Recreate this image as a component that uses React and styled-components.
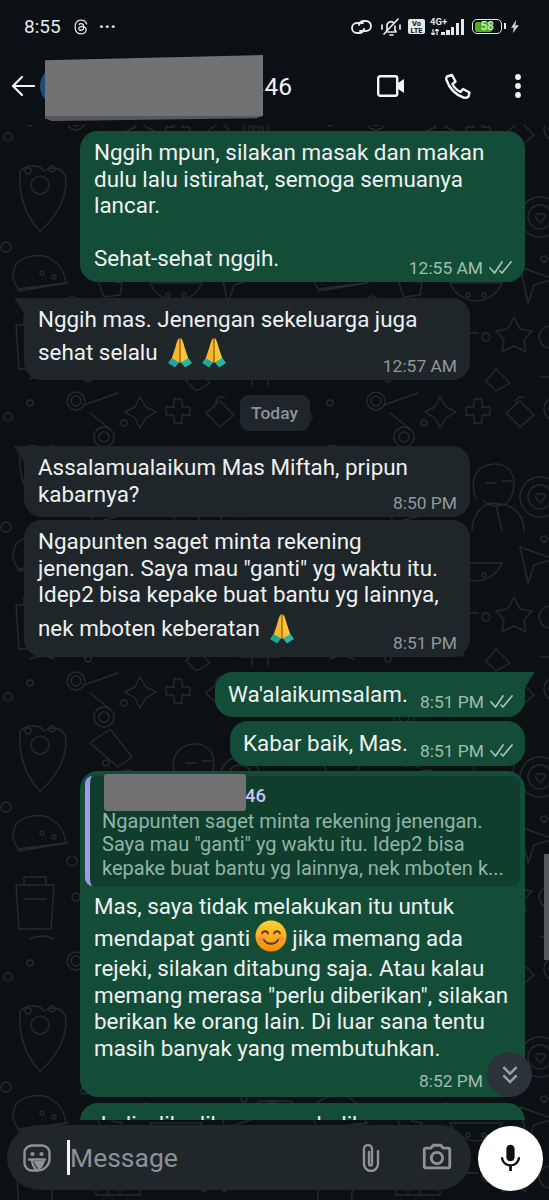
import React from "react";
import styled, { createGlobalStyle } from "styled-components";
import { MdMic, MdOutlinePhotoCamera, MdKeyboardDoubleArrowDown } from "react-icons/md";
import { FaThreads } from "react-icons/fa6";

const GlobalStyle = createGlobalStyle`
  html, body { margin: 0; padding: 0; background: #0b1014; }
  * { box-sizing: border-box; }
`;

// wallpaper doodles, roughly the kind of things whatsapp scatters around
const doodleTile = `<svg xmlns='http://www.w3.org/2000/svg' width='300' height='280' fill='none' stroke='#23292c' stroke-width='1.4' stroke-linecap='round' stroke-linejoin='round'>
<circle cx='76' cy='10' r='9'/><circle cx='76' cy='10' r='5'/><path d='M84 14l34-12M90 22l20 16'/><circle cx='104' cy='46' r='10'/><circle cx='104' cy='46' r='5'/>
<path d='M140 6l6 10 10 5-10 6-6 10-5-10-10-6 10-5z'/><path d='M166 16h8v-8h8v8h8v8h-8v8h-8v-8h-8z'/><path d='M206 22l14-12 14 14-14 12zM216 12c0-5 4-8 8-5'/>
<circle cx='8' cy='26' r='4'/><circle cx='30' cy='12' r='3'/><circle cx='124' cy='32' r='3'/><circle cx='256' cy='18' r='12'/><circle cx='256' cy='18' r='7'/><path d='M252 16c2-3 4 0 4 1 1-2 5-2 4 1l-4 5z'/>
<path d='M20 60c10-8 20-6 24 0 10-6 22-2 22 10 0 22-14 40-26 50-14-14-22-36-20-60z'/><circle cx='40' cy='74' r='9'/><circle cx='28' cy='60' r='3'/><circle cx='52' cy='58' r='3'/>
<path d='M90 72l20-14 22 28-14 10z'/><path d='M90 124l50-14 4 8-50 14z'/><path d='M118 104c2-6 14-6 16-2l2 8-18 4z'/><circle cx='106' cy='92' r='3'/>
<path d='M176 108c-6-16-2-30 12-34 14-4 26 4 26 18 0 10-4 20-12 22-8 2-14 0-18-4M186 92h10M202 90h10M172 140c0-14 8-26 20-28l14 2c12 4 18 14 18 26M196 114l6 26'/>
<path d='M240 86a20 20 0 1 0 .1 0M240 94a12 12 0 1 0 .1 0'/><path d='M236 104c2-3 4-1 4 0 1-1 3-3 5 0 1 3-3 6-5 8-2-2-5-5-4-8z'/>
<path d='M14 158c4-14 30-18 40-8 8 6 10 12 12 22l-48 6c-4-6-6-14-4-20zM18 180l50-8'/><circle cx='42' cy='162' r='2'/><circle cx='54' cy='166' r='2'/><circle cx='84' cy='140' r='3'/><circle cx='72' cy='190' r='5'/><circle cx='6' cy='136' r='5'/>
<path d='M94 158l14-4 4 16 10 2-2 12-16 2z'/><circle cx='146' cy='156' r='4'/><path d='M150 172a28 28 0 0 0 52 0z'/><circle cx='168' cy='184' r='2'/><circle cx='184' cy='184' r='2'/>
<path d='M220 156l34 12-20 6-6 18z'/><path d='M262 150h26a7 7 0 0 1 0 14h-26a7 7 0 0 1 0-14z'/><circle cx='272' cy='157' r='6'/><circle cx='244' cy='148' r='3'/>
<path d='M16 214h38l-3 44H19z'/><path d='M24 214v-8h22v8M24 228h22'/><circle cx='76' cy='226' r='4'/><path d='M96 210h44v34H96zM96 220h44M108 210v34M120 210v34M104 250h28'/><path d='M112 196l6-6 6 6'/>
<path d='M158 222h20M186 222a4 4 0 1 0 .1 0'/><path d='M214 206l6 12 12 2-8 9 2 12-12-6-12 6 2-12-8-9 12-2z'/><circle cx='250' cy='226' r='11'/><path d='M268 204c10-6 22 0 22 12s-10 22-22 22-16-8-16-8'/>
<circle cx='160' cy='262' r='3'/><circle cx='88' cy='268' r='3'/><path d='M196 258l14 14-14 8-10-10zM240 266h40M252 258v16M268 258v16'/><path d='M30 268c8-4 16-4 24 0'/></svg>`;

const Page = styled.div`
  width: 549px;
  height: 1200px;
  position: relative;
  overflow: hidden;
  display: flex;
  flex-direction: column;
  background: #0b1014;
  font-family: Roboto, "Liberation Sans", sans-serif;
`;

const StatusBar = styled.div`
  height: 47px;
  padding: 6px 30px 0 24px;
  display: flex;
  align-items: center;
  color: #e6e8e9;
`;

const StatusTime = styled.span`
  font-size: 19px;
  margin-right: 12px;
`;

const Dots = styled.span`
  margin-left: 10px;
  font-size: 18px;
  letter-spacing: 0.5px;
  font-weight: 700;
  line-height: 1;
`;

const StatusRight = styled.div`
  margin-left: auto;
  display: flex;
  align-items: center;
`;

const VoLte = styled.span`
  width: 17px;
  height: 15px;
  margin-left: 6px;
  border-radius: 2px;
  background: #e6e8e9;
  color: #0b1014;
  font-size: 7.5px;
  font-weight: 700;
  line-height: 7px;
  text-align: center;
  padding-top: 1px;
`;

const NetWrap = styled.div`
  position: relative;
  width: 34px;
  height: 16px;
  margin-left: 5px;
  display: flex;
  align-items: flex-end;
  justify-content: flex-end;
  gap: 1.4px;
`;

const NetLabel = styled.span`
  position: absolute;
  left: 0;
  top: -2px;
  font-size: 9.5px;
  line-height: 10px;
  font-weight: 700;
`;

const NetArrows = styled.svg`
  position: absolute;
  left: 1px;
  bottom: 0;
`;

const SignalBar = styled.span`
  width: 3.4px;
  height: ${(p) => p.$h}px;
  background: #e6e8e9;
`;

const Battery = styled.span`
  position: relative;
  width: 30px;
  height: 15px;
  margin-left: 8px;
  border: 1.5px solid #e6e8e9;
  border-radius: 5px;
  padding: 1.5px;
  display: flex;
  &::after {
    content: "";
    position: absolute;
    right: -5px;
    top: 3px;
    width: 2px;
    height: 6px;
    background: #e6e8e9;
  }
`;

const BatteryFill = styled.span`
  width: 68%;
  background: #4caf22;
  border-radius: 2px;
  font-size: 12px;
  line-height: 9.5px;
  color: #e8f5e0;
  padding-left: 6px;
  white-space: nowrap;
`;

const Header = styled.div`
  height: 78px;
  padding-left: 11px;
  display: flex;
  align-items: center;
  color: #f2f4f5;
`;

const Avatar = styled.span`
  flex: none;
  width: 40px;
  height: 40px;
  margin-left: 5px;
  border-radius: 50%;
  background: #1d4a78;
`;

const Name = styled.span`
  width: 210px;
  margin-left: 2px;
  text-align: right;
  font-size: 24.5px;
`;

const HeaderActions = styled.div`
  margin-left: auto;
  padding-right: 19px;
  display: flex;
  align-items: center;
`;

const HeaderRedaction = styled.div`
  position: absolute;
  left: 45px;
  top: 55px;
  width: 218px;
  height: 66px;
  background: linear-gradient(#727274 93%, #58585a 93%);
  clip-path: polygon(0 8%, 100% 0, 100% 92%, 97% 96%, 3% 100%, 0 96%);
`;

const Wallpaper = styled.div`
  flex: 1;
  min-height: 0;
  display: flex;
  flex-direction: column;
  background-color: #0b1014;
  background-image: url("data:image/svg+xml,${encodeURIComponent(doodleTile)}");
  background-position: 0 -14px;
`;

const Chat = styled.div`
  flex: 1;
  min-height: 0;
  overflow: hidden;
  padding: 6px 24px 0;
  display: flex;
  flex-direction: column;
`;

const Bubble = styled.div`
  position: relative;
  flex: none;
  margin-top: ${(p) => p.$gap || 0}px;
  align-self: ${(p) => (p.$out ? "flex-end" : "flex-start")};
  width: ${(p) => p.$width || 446}px;
  background: ${(p) => (p.$out ? "#144d37" : "#1f2629")};
  border-radius: 18px;
  ${(p) => (p.$tail ? (p.$out ? "border-top-right-radius: 0;" : "border-top-left-radius: 0;") : "")}
  padding: ${(p) => (p.$row ? "9px 12px 3px 13px" : "8px 13px 2px 14px")};
  display: ${(p) => (p.$row ? "flex" : "block")};
  justify-content: space-between;
  align-items: flex-start;
  ${(p) =>
    p.$tail
      ? `&::before {
    content: "";
    position: absolute;
    ${p.$out ? "right: -10px;" : "left: -10px;"}
    top: 0;
    width: 10px;
    height: 16px;
    background: ${p.$out ? "#144d37" : "#1f2629"};
    clip-path: polygon(${p.$out ? "0 0, 100% 0, 0 100%" : "0 0, 100% 0, 100% 100%"});
  }`
      : ""}
`;

const Text = styled.div`
  font-size: 22.4px;
  line-height: 26.5px;
  color: #eef1f2;
  white-space: pre;
`;

const Meta = styled.div`
  display: flex;
  justify-content: flex-end;
  align-items: center;
  gap: 6px;
  margin-top: ${(p) => p.$pull ?? -16}px;
  margin-bottom: ${(p) => p.$after || 0}px;
  height: 24px;
  font-size: 17.4px;
  color: ${(p) => (p.$out ? "#9dbdae" : "#92989b")};
`;

const DayChip = styled.div`
  flex: none;
  align-self: center;
  margin: 15px 0;
  width: 70px;
  height: 36px;
  border-radius: 9px;
  background: #1f2629;
  color: #8e9396;
  font-size: 17.4px;
  font-weight: 500;
  display: flex;
  align-items: center;
  justify-content: center;
`;

const Quote = styled.div`
  position: relative;
  margin: -3px -8px 7px -9px;
  height: 110px;
  border-radius: 8px;
  border-left: 5px solid #a396ee;
  background: #0f3e2d;
  padding: 9px 0 0 12px;
`;

const QuoteName = styled.div`
  font-size: 18.5px;
  font-weight: 500;
  line-height: 22px;
  color: #c9c6f4;
  padding-left: 143px;
`;

const QuoteText = styled.div`
  margin-top: 3px;
  font-size: 20px;
  line-height: 23.6px;
  color: #92b3a5;
  white-space: pre;
`;

const QuoteRedaction = styled.div`
  position: absolute;
  left: 14px;
  top: -2px;
  width: 142px;
  height: 37px;
  border-radius: 3px;
  background: #707173;
`;

const Smile = styled.svg`
  width: 32px;
  height: 32px;
  vertical-align: -9px;
  margin: 1px 0 3px -1px;
`;

const Pray = styled.svg`
  width: 24px;
  height: 31px;
  vertical-align: -8px;
  margin: 5px 5px 0;
`;

const ScrollDown = styled.div`
  position: absolute;
  left: 487px;
  top: 1052px;
  width: 45px;
  height: 45px;
  border-radius: 50%;
  background: #2b3238;
  color: #9aa1a5;
  display: flex;
  align-items: center;
  justify-content: center;
`;

const ScrollThumb = styled.div`
  position: absolute;
  right: 0;
  top: 854px;
  width: 5px;
  height: 106px;
  background: #54585b;
`;

const Composer = styled.div`
  flex: none;
  height: 80px;
  padding: 5px 0 0 7px;
  display: flex;
  align-items: flex-start;
  gap: 7px;
`;

const InputPill = styled.div`
  width: 464px;
  height: 65px;
  border-radius: 33px;
  background: #1f272a;
  display: flex;
  align-items: center;
  padding-left: 16px;
  color: #8d9295;
`;

const Caret = styled.span`
  flex: none;
  width: 3px;
  height: 35px;
  background: #f4f5f5;
  margin-left: 16px;
`;

const Placeholder = styled.span`
  font-size: 26.5px;
  width: 292px;
`;

const Mic = styled.div`
  width: 65px;
  height: 65px;
  margin-top: 1px;
  border-radius: 50%;
  background: #fff;
  color: #0b1014;
  display: flex;
  align-items: center;
  justify-content: center;
`;

const Icon = styled.svg`
  display: block;
  flex: none;
  margin-left: ${(p) => p.$ml || 0}px;
`;

const PrayEmoji = () => (
  <Pray viewBox="0 0 24 31">
    <path d="M11.500 1C9.500 2 8.500 6 7.500 10L3.500 22l8 4z" fill="#f9b62c" />
    <path d="M12.500 1c2 1 3 5 4 9l4 12-8 4z" fill="#fcc437" />
    <path d="M3.500 21L0 26l7 4.500 4-5z" fill="#1fa69a" />
    <path d="M20.500 21l3.500 5-7 4.500-4-5z" fill="#26b5a7" />
    <path d="M12 3v22" stroke="#dc8c14" strokeWidth="1" />
  </Pray>
);

const SmileEmoji = () => (
  <Smile viewBox="0 0 32 32">
    <defs>
      <linearGradient id="smileFace" x1="0" y1="0" x2="0" y2="1">
        <stop offset="0" stopColor="#fdd135" />
        <stop offset="1" stopColor="#f58a0b" />
      </linearGradient>
    </defs>
    <circle cx="16" cy="16" r="15.500" fill="url(#smileFace)" />
    <ellipse cx="6.500" cy="19" rx="3.500" ry="2.500" fill="#f4796b" opacity=".7" />
    <ellipse cx="25.500" cy="19" rx="3.500" ry="2.500" fill="#f4796b" opacity=".7" />
    <path d="M7 13.500c1-3 5-3 6 0M19 13.500c1-3 5-3 6 0M9 20c3 5 11 5 14 0" fill="none" stroke="#5d3a12" strokeWidth="1.800" strokeLinecap="round" />
  </Smile>
);

const Ticks = () => (
  <Icon width="23" height="15" viewBox="0 0 23 15" fill="none" stroke="#a5c2b5" strokeWidth="1.700" strokeLinecap="round" strokeLinejoin="round">
    <path d="M1 8l4.500 5L13 2M11 11l2 2L22 2" />
  </Icon>
);

export default function App() {
  return (
    <Page>
      <GlobalStyle />
      <StatusBar>
        <StatusTime>8:55</StatusTime>
        <FaThreads size={16} />
        <Dots>···</Dots>
        <StatusRight>
          <Icon width="21" height="18" viewBox="0 0 21 18" fill="none" stroke="#e6e8e9" strokeWidth="1.900" strokeLinecap="round">
            <path d="M12 5H6a5 5 0 0 0 0 10h3a5 5 0 0 0 4-4" />
            <path d="M9 13h6a5 5 0 0 0 0-10h-3a5 5 0 0 0-4 4" />
          </Icon>
          <Icon $ml={8} width="22" height="20" viewBox="0 0 22 20" fill="none" stroke="#e6e8e9" strokeWidth="1.700" strokeLinecap="round" strokeLinejoin="round">
            <path d="M6 15l1-2V9a4 4 0 0 1 7-3M15 9v4l1 2H8M10 18h3M4 17L18 2M2 8v4M20 8v4" />
          </Icon>
          <VoLte>Vo<br />LTE</VoLte>
          <NetWrap>
            <NetLabel>4G+</NetLabel>
            <NetArrows width="8" height="6" viewBox="0 0 8 6" fill="none" stroke="#e6e8e9" strokeWidth="1.200">
              <path d="M2 0v6M0 4l2 2 2-2M6 6V0M4 2l2-2 2 2" />
            </NetArrows>
            {[3, 5, 8, 12, 16].map((h) => (
              <SignalBar key={h} $h={h} />
            ))}
          </NetWrap>
          <Battery>
            <BatteryFill>58</BatteryFill>
          </Battery>
          <Icon $ml={9} width="8" height="15" viewBox="0 0 9 15" fill="#c9cbcc">
            <path d="M6 0L0 9h3l-1 6 7-9H5z" />
          </Icon>
        </StatusRight>
      </StatusBar>

      <Header>
        <Icon width="24" height="24" viewBox="0 0 24 24" fill="none" stroke="#f2f4f5" strokeWidth="2.200" strokeLinecap="round" strokeLinejoin="round">
          <path d="M23 12H2M11 3l-9 9 9 9" />
        </Icon>
        <Avatar />
        <Name>346</Name>
        <HeaderActions>
          <Icon width="28" height="24" viewBox="0 0 28 24" fill="none">
            <rect x="1.200" y="2.200" width="19" height="19.600" rx="2" stroke="#f2f4f5" strokeWidth="2.400" />
            <path d="M21 9l6-4v14l-6-4z" fill="#f2f4f5" />
          </Icon>
          <Icon $ml={40} width="26" height="26" viewBox="0 0 26 26" fill="none" stroke="#f2f4f5" strokeWidth="2.400" strokeLinejoin="round">
            <path d="M2 3.500l5-1.500 3.500 6.500-3 2.500c1.500 3.500 4 6 8 8l2.500-3 6.500 3.500-1 4c-1 1.500-3 1.500-5 1C10 21.500 4.500 15.500 1.500 7c-.5-1.500-.2-2.500.5-3.500z" />
          </Icon>
          <Icon $ml={35} width="24" height="26" viewBox="0 0 24 26" fill="#f2f4f5">
            <circle cx="12" cy="4" r="2.900" />
            <circle cx="12" cy="13" r="2.900" />
            <circle cx="12" cy="22" r="2.900" />
          </Icon>
        </HeaderActions>
      </Header>
      <HeaderRedaction />

      <Wallpaper>
        <Chat>
          <Bubble $out $width={445}>
            <Text>{"Nggih mpun, silakan masak dan makan\ndulu lalu istirahat, semoga semuanya\nlancar.\n\nSehat-sehat nggih."}</Text>
            <Meta $out><span>12:55 AM</span><Ticks /></Meta>
          </Bubble>

          <Bubble $gap={16} $tail>
            <Text>
              {"Nggih mas. Jenengan sekeluarga juga\nsehat selalu "}
              <PrayEmoji />
              <PrayEmoji />
            </Text>
            <Meta $pull={-14}><span>12:57 AM</span></Meta>
          </Bubble>

          <DayChip>Today</DayChip>

          <Bubble $tail>
            <Text>{"Assalamualaikum Mas Miftah, pripun\nkabarnya?"}</Text>
            <Meta><span>8:50 PM</span></Meta>
          </Bubble>

          <Bubble $gap={3}>
            <Text>
              {"Ngapunten saget minta rekening\njenengan. Saya mau \"ganti\" yg waktu itu.\nIdep2 bisa kepake buat bantu yg lainnya,\nnek mboten keberatan "}
              <PrayEmoji />
            </Text>
            <Meta $pull={-13}><span>8:51 PM</span></Meta>
          </Bubble>

          <Bubble $out $row $tail $gap={15} $width={310}>
            <Text>Wa'alaikumsalam.</Text>
            <Meta $out $pull={9}><span>8:51 PM</span><Ticks /></Meta>
          </Bubble>

          <Bubble $out $row $gap={4} $width={295}>
            <Text>Kabar baik, Mas.</Text>
            <Meta $out $pull={9}><span>8:51 PM</span><Ticks /></Meta>
          </Bubble>

          <Bubble $out $gap={5} $width={445}>
            <Quote>
              <QuoteName>46</QuoteName>
              <QuoteText>{"Ngapunten saget minta rekening jenengan.\nSaya mau \"ganti\" yg waktu itu. Idep2 bisa\nkepake buat bantu yg lainnya, nek mboten k..."}</QuoteText>
              <QuoteRedaction />
            </Quote>
            <Text>
              {"Mas, saya tidak melakukan itu untuk\nmendapat ganti "}
              <SmileEmoji />
              {" jika memang ada\nrejeki, silakan ditabung saja. Atau kalau\nmemang merasa \"perlu diberikan\", silakan\nberikan ke orang lain. Di luar sana tentu\nmasih banyak yang membutuhkan."}
            </Text>
            <Meta $out $pull={8} $after={2}><span>8:52 PM</span><Ticks /></Meta>
          </Bubble>

          <Bubble $out $gap={6} $width={445}>
            <Text>Jadi, alih alih mengembalikan</Text>
          </Bubble>
        </Chat>

        <Composer>
          <InputPill>
            <Icon width="28" height="28" viewBox="0 0 28 28" fill="none" stroke="#8d9295" strokeWidth="2.400" strokeLinecap="round" strokeLinejoin="round">
              <path d="M9 1.500h10A7.500 7.500 0 0 1 26.500 9v6c0 6-5.500 11.500-11.500 11.500H9A7.500 7.500 0 0 1 1.500 19V9A7.500 7.500 0 0 1 9 1.500z" />
              <path d="M6 15.500h16M9 15.500c0 5 2 8 5 11M21 16c-1 5-3 7-6 10" />
              <path d="M11 17h9c-.5 3-2 5-4.500 7.500-2-2-4-4.500-4.500-7.500z" fill="#8d9295" stroke="none" />
              <circle cx="9.500" cy="10" r="2.100" fill="#8d9295" stroke="none" />
              <circle cx="18.500" cy="10" r="2.100" fill="#8d9295" stroke="none" />
            </Icon>
            <Caret />
            <Placeholder>Message</Placeholder>
            <Icon width="18" height="29" viewBox="0 0 18 29" fill="none" stroke="#8d9295" strokeWidth="2.400" strokeLinecap="round">
              <path d="M16 8v13a7 7 0 0 1-14 0V6a4 4 0 0 1 8 0v15a1.500 1.500 0 0 1-3 0V9" />
            </Icon>
            <MdOutlinePhotoCamera size={34} style={{ marginLeft: 40 }} />
          </InputPill>
          <Mic>
            <MdMic size={33} />
          </Mic>
        </Composer>
      </Wallpaper>

      <ScrollThumb />
      <ScrollDown>
        <MdKeyboardDoubleArrowDown size={30} />
      </ScrollDown>
    </Page>
  );
}
